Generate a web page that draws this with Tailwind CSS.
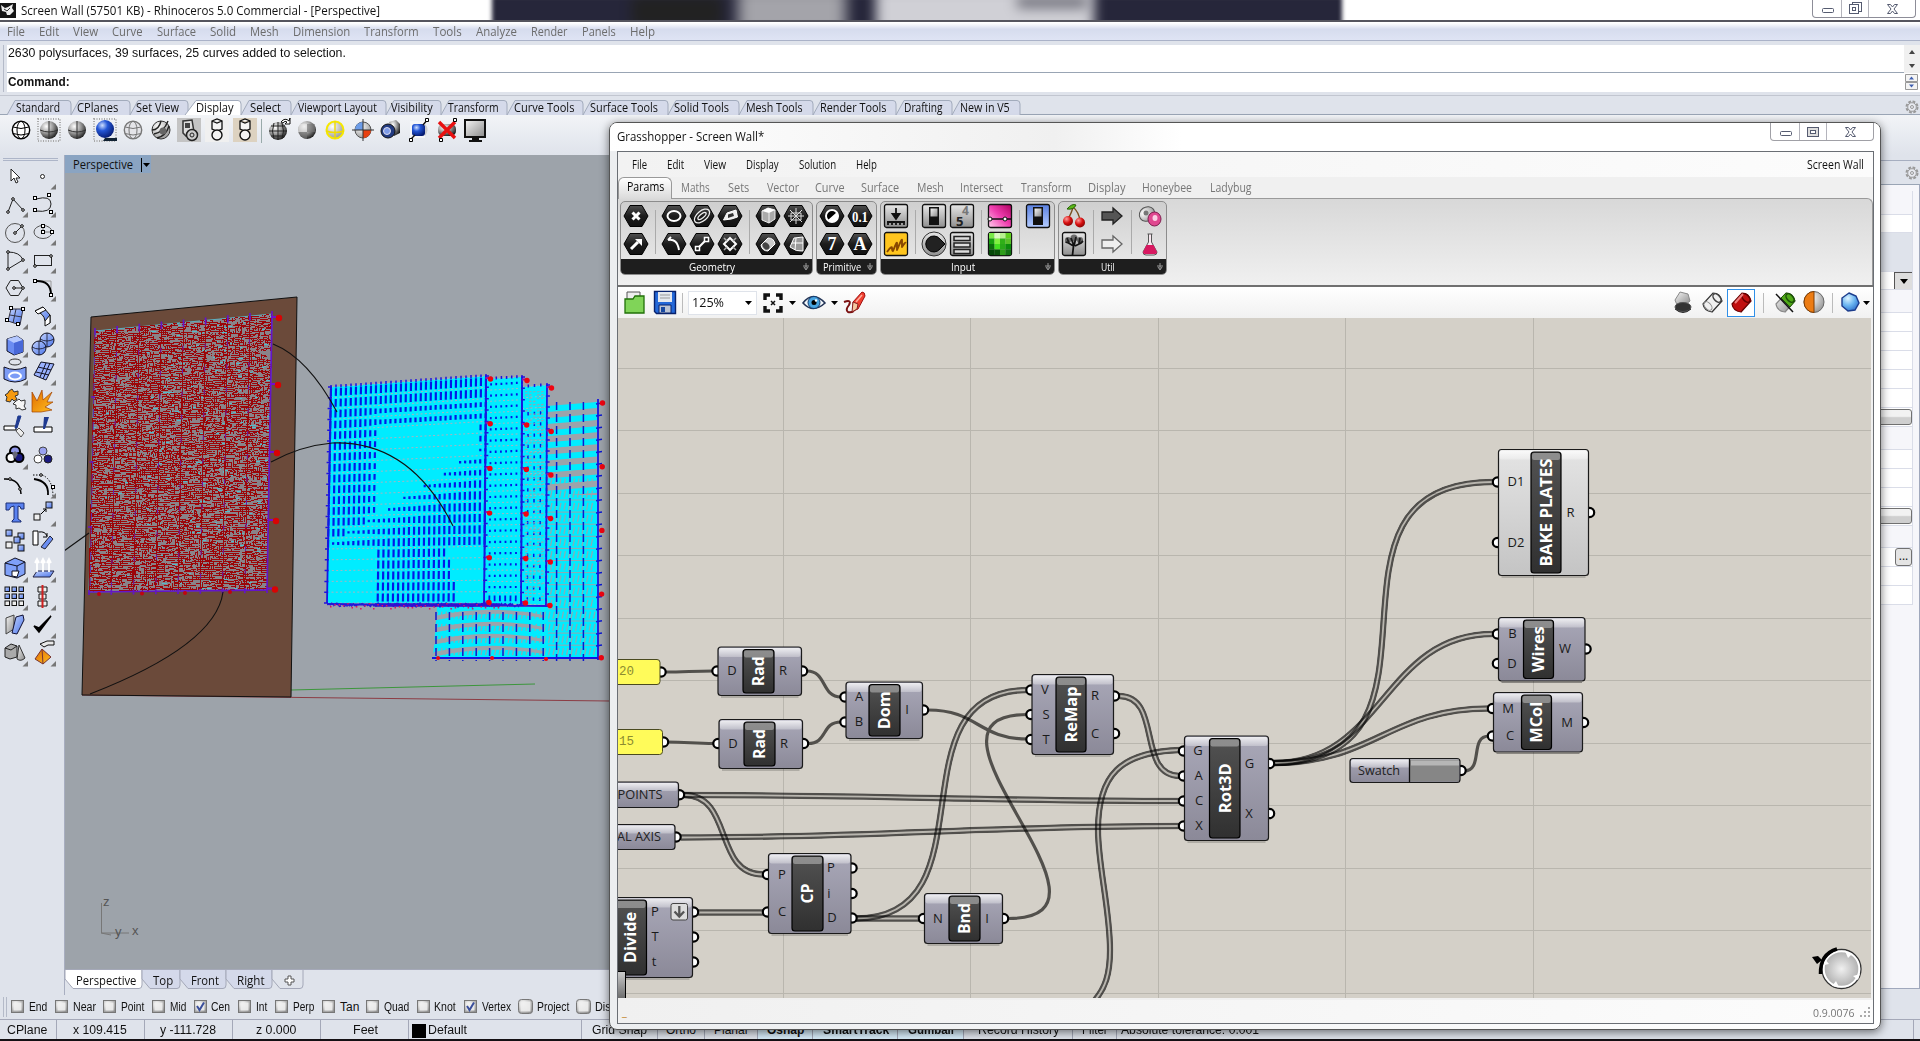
<!DOCTYPE html>
<html lang="en">
<head>
<meta charset="utf-8">
<title>Screen Wall - Rhinoceros 5.0</title>
<script src="https://cdn.jsdelivr.net/npm/@tailwindcss/browser@4"></script>
</head>
<body class="relative flex h-[1041px] w-[1920px] flex-col overflow-hidden bg-[#dfe3eb] font-['Open_Sans','Noto_Sans',sans-serif] text-[12px] leading-none text-[#111]">

<svg class="absolute h-0 w-0" aria-hidden="true"><defs>
<radialGradient id="gs" cx=".35" cy=".3" r=".75"><stop offset="0" stop-color="#fff"/><stop offset=".5" stop-color="#999"/><stop offset="1" stop-color="#1a1a1a"/></radialGradient>
<radialGradient id="gl" cx=".35" cy=".3" r=".8"><stop offset="0" stop-color="#fff"/><stop offset="1" stop-color="#909090"/></radialGradient>
<radialGradient id="gb" cx=".35" cy=".3" r=".75"><stop offset="0" stop-color="#cfe0ff"/><stop offset=".4" stop-color="#2456d6"/><stop offset="1" stop-color="#051a70"/></radialGradient>
<radialGradient id="gc" cx=".35" cy=".3" r=".8"><stop offset="0" stop-color="#ddf4ff"/><stop offset=".5" stop-color="#6bb5f0"/><stop offset="1" stop-color="#2868c8"/></radialGradient>
<radialGradient id="gr" cx=".35" cy=".3" r=".8"><stop offset="0" stop-color="#ff9a9a"/><stop offset=".5" stop-color="#d81010"/><stop offset="1" stop-color="#700"/></radialGradient>
<linearGradient id="lb" x1="0" y1="0" x2="1" y2="1"><stop offset="0" stop-color="#c4d4ff"/><stop offset="1" stop-color="#4a74e8"/></linearGradient>
<linearGradient id="lg" x1="0" y1="0" x2="1" y2="1"><stop offset="0" stop-color="#f6f6f6"/><stop offset="1" stop-color="#8a8a8a"/></linearGradient>
<linearGradient id="lo" x1="0" y1="0" x2="1" y2="1"><stop offset="0" stop-color="#e06a00"/><stop offset="1" stop-color="#ffc020"/></linearGradient>
<linearGradient id="hx" x1="0" y1="0" x2="0" y2="1"><stop offset="0" stop-color="#505050"/><stop offset=".5" stop-color="#1c1c1c"/><stop offset="1" stop-color="#111"/></linearGradient>
<linearGradient id="bt" x1="0" y1="0" x2="0" y2="1"><stop offset="0" stop-color="#e8e8e8"/><stop offset="1" stop-color="#8e8e8e"/></linearGradient>
<linearGradient id="bb" x1="0" y1="0" x2="0" y2="1"><stop offset="0" stop-color="#5a80e0"/><stop offset="1" stop-color="#b4ccff"/></linearGradient>
<linearGradient id="pk" x1="0" y1="1" x2="1" y2="0"><stop offset="0" stop-color="#ffd0ee"/><stop offset=".5" stop-color="#f040b0"/><stop offset="1" stop-color="#b00060"/></linearGradient>
<linearGradient id="nd" x1="0" y1="0" x2="0" y2="1"><stop offset="0" stop-color="#a9a8b8"/><stop offset="1" stop-color="#8b8998"/></linearGradient>
<linearGradient id="nw" x1="0" y1="0" x2="0" y2="1"><stop offset="0" stop-color="#e4e4e4"/><stop offset="1" stop-color="#c4c4c4"/></linearGradient>
<linearGradient id="gl2" x1="0" y1="0" x2="0" y2="1"><stop offset="0" stop-color="#fff" stop-opacity=".8"/><stop offset="1" stop-color="#fff" stop-opacity=".3"/></linearGradient>
<linearGradient id="nb" x1="0" y1="0" x2="0" y2="1"><stop offset="0" stop-color="#525252"/><stop offset="1" stop-color="#303030"/></linearGradient>
<linearGradient id="gd" x1="0" y1="0" x2="0" y2="1"><stop offset="0" stop-color="#ccc"/><stop offset="1" stop-color="#6c6c6c"/></linearGradient>
</defs></svg>

<!-- title bar -->
<header class="relative flex h-[22px] shrink-0 items-start overflow-hidden border-b-2 border-[#55555e] bg-white">
  <div class="absolute -top-1 left-[492px] h-8 w-[850px] overflow-hidden bg-[#26263a] blur-[2px]">
    <div class="absolute top-0 left-[140px] h-8 w-[90px] bg-[#222] blur-[6px]"></div>
    <div class="absolute -top-2 left-[246px] h-12 w-[108px] bg-[#a4a4aa] blur-[7px]"></div>
    <div class="absolute -top-2 left-[384px] h-12 w-[218px] bg-[#d0d0d6] blur-[6px]"></div>
    <div class="absolute top-0 left-[525px] h-3 w-[70px] bg-[#70707a] blur-[6px]"></div>
  </div>
  <svg class="mt-[3px] h-[15px] w-4" viewBox="0 0 16 15"><rect width="16" height="15" fill="#151515"/><path d="M1 2l4 3 3-1 5-3-1 4 2 3-4 4-3 0-1-3-4-1z" fill="#eee"/><path d="M4 6l3 2 3-3" stroke="#333" fill="none"/></svg>
  <span class="mt-[5px] ml-[5px] whitespace-nowrap" data-w="359">Screen Wall (57501 KB) - Rhinoceros 5.0 Commercial - [Perspective]</span>
  <div class="ml-auto mr-[4px] flex h-[18px] rounded-b-[4px] border border-t-0 border-[#8d8d98] bg-white" id="rb"></div>
</header>

<nav class="flex h-[19px] shrink-0 items-center border-b border-[#aab2c8] bg-linear-to-b from-white from-5% via-[#d6dcee] via-40% to-[#dfe4f4] pt-[2px] text-[#6c6c6c]" id="menu"></nav>

<!-- command area -->
<section class="mt-1 ml-[3px] flex h-[47px] shrink-0 border-l border-[#b4bac8] pl-[3px] font-['Liberation_Sans',sans-serif]">
  <div class="flex flex-1 flex-col bg-white">
    <div class="flex h-7 justify-between border-b border-[#99a5b4]">
      <span class="mt-[2px] ml-[1px] whitespace-nowrap" data-w="338">2630 polysurfaces, 39 surfaces, 25 curves added to selection.</span>
      <svg class="h-7 w-4 bg-[#f0f0f0]" viewBox="0 0 16 28"><path d="M5 9l3-4 3 4zM5 19l3 4 3-4z" fill="#444"/></svg>
    </div>
    <div class="flex flex-1 justify-between">
      <span class="mt-[3px] ml-[1px] whitespace-nowrap font-bold" data-w="62">Command:</span>
      <svg class="mt-px mr-[2px] h-4 w-[13px]" viewBox="0 0 13 16"><path d="M.5.5h12v7H.5zM.5 8.500h12v7H.5z" fill="#f4f4f4" stroke="#999"/><path d="M4 5.500l2.500-3 2.500 3zM4 10.500l2.500 3 2.500-3z" fill="#3f5fb0"/></svg>
    </div>
  </div>
</section>

<!-- toolbar tabs -->
<div class="mt-[3px] flex h-5 shrink-0 items-end border-t border-b border-t-[#c2c6d0] border-b-[#9aa5b5] pl-[7px]" id="tabs"></div>

<div class="flex h-10 shrink-0 items-start bg-linear-to-b from-[#f2f4f7] to-[#dfe3eb] pl-[7px]" id="tools"></div>

<main class="flex min-h-0 flex-1">
  <aside class="w-[65px] shrink-0 border-r border-[#a8aec0]">
    <div class="mt-[3px] ml-[3px] h-[3px] w-[55px] border-y border-[#adb5c8]"></div>
    <div class="mt-[1px] ml-[1px] grid w-14 auto-rows-[28.06px] grid-cols-[28px_28px]" id="side"></div>
  </aside>
  <div class="flex w-[545px] shrink-0 flex-col">
    <svg class="h-[814px] w-[545px] bg-[#9da3aa]" viewBox="65 155 545 814" id="scene"></svg>
    <div class="flex h-5 items-start border-t border-[#a4a8b8]" id="vtabs"></div>
  </div>
  <div class="flex-1"></div>
  <aside class="flex w-[60px] shrink-0 flex-col">
    <div class="mt-[5px] flex h-[25px] items-center justify-end border-t border-b border-t-[#a6aec0] border-b-[#9aa5b5] pr-[1px]" data-gear></div>
    <div class="flex h-[804px] flex-col border-r border-b border-[#a0a8bc] bg-[#f6f6fa] pr-[6px] pt-[6px]" id="props"></div>
  </aside>
</main>

<div class="ml-[3px] flex h-[22px] shrink-0 items-center pt-[1px] font-['Liberation_Sans',sans-serif]"><i class="h-5 w-[4px] border-x border-[#b4bac8]"></i><div class="flex" id="osnap"></div></div>
<div class="mt-[2px] flex h-5 shrink-0 border-t border-[#a4a8b8] font-['Liberation_Sans',sans-serif]" id="status"></div>
<div class="h-[2px] shrink-0 bg-[#141014]"></div>

<!-- Grasshopper window -->
<section class="absolute top-[122px] left-[609px] flex h-[908px] w-[1272px] flex-col rounded-[8px] border border-[#555] bg-linear-to-r from-[#eceef0] to-white shadow-[0_2px_10px_rgba(0,0,0,0.55)]">
  <div class="flex h-7 shrink-0 items-start rounded-t-[7px] bg-linear-to-r from-white via-[#f0f0f0] via-35% to-white to-45%">
    <span class="mt-[8px] ml-[7px] whitespace-nowrap" data-w="147">Grasshopper - Screen Wall*</span>
    <div class="ml-auto mr-[6px] flex h-[18px] rounded-b-[4px] border border-t-0 border-[#a0a0a6] bg-white" id="gb2"></div>
  </div>
  <div class="mr-[6px] ml-[7px] flex h-[873px] flex-col border border-[#6a6e74] bg-[#f0f0f0]">
    <div class="flex h-[25px] shrink-0 items-center bg-linear-to-r from-[#f2f2f2] to-[#fcfcfc]">
      <div class="flex" id="gmenu"></div>
      <span class="ml-auto mr-[9px] whitespace-nowrap" data-w="57">Screen Wall</span>
    </div>
    <div class="relative flex h-[21px] shrink-0 text-[#777]">
      <div class="z-10 mb-[-1px] flex h-[22px] w-[54px] shrink-0 justify-center rounded-t-[6px] border border-b-0 border-[#999] bg-linear-to-b from-white to-[#dadada] pt-[3px] text-black"><span class="whitespace-nowrap" data-w="37">Params</span></div>
      <div class="flex pt-[5px]" id="gtabs"></div>
    </div>
    <div class="flex h-[87px] shrink-0 items-start gap-[3px] rounded-tr-[6px] border-t border-r border-[#9a9a9a] bg-linear-to-b from-[#d8d8d8] to-[#f0f0f0] pt-[2px] pl-[2px]" id="ribbon"></div>
    <div class="flex h-[33px] shrink-0 items-center border-t-2 border-[#707070] bg-linear-to-b from-white to-[#f1f1f1]" id="gtools"></div>
    <svg class="h-[680px] w-[1253px] shrink-0 bg-[#d4d0c8]" viewBox="618 318 1253 680" id="canvas"></svg>
    <div class="mt-[2px] flex flex-1 items-center justify-between bg-linear-to-r from-[#f0f0f0] to-[#fcfcfc] pl-1 text-[11px] text-[#777]">
      <span class="text-[#c08020]">_</span>
      <span class="flex items-end gap-[4px]"><span class="whitespace-nowrap" data-w="42">0.9.0076</span><svg class="mr-[2px] h-3 w-3" viewBox="0 0 12 12"><path d="M9 1h2v2H9zM5 5h2v2H5zM9 5h2v2H9zM1 9h2v2H1zM5 9h2v2H5zM9 9h2v2H9z" fill="#aaa"/></svg></span>
    </div>
  </div>
</section>

<script>
const $ = id => document.getElementById(id);
let seed = 7;
const rnd = () => (seed = (seed * 16807) % 2147483647) / 2147483647;
const svg = (inner, w, h, cls) => `<svg class="${cls || 'shrink-0'}" width="${w}" height="${h}" viewBox="0 0 ${w} ${h}">${inner}</svg>`;

// A row of labels: [text, left, right], spaced from the row's own origin.
const labels = (list, origin) => { let at = origin; return list.map(([t, a, b]) => { const s = `<span class="inline-block whitespace-nowrap" style="margin-left:${a - at}px" data-w="${b - a}">${t}</span>`; at = b; return s; }).join(''); };

$('menu').innerHTML = labels([['File',7,25],['Edit',39,59],['View',73,98],['Curve',112,143],['Surface',157,196],['Solid',210,236],['Mesh',250,279],['Dimension',293,350],['Transform',364,419],['Tools',433,462],['Analyze',476,517],['Render',531,568],['Panels',582,616],['Help',630,655]], 0);
$('gmenu').innerHTML = labels([['File',632,647],['Edit',667,684],['View',704,726],['Display',746,779],['Solution',799,836],['Help',856,877]], 618);
$('gtabs').innerHTML = labels([['Maths',681,710],['Sets',728,749],['Vector',767,799],['Curve',815,845],['Surface',861,899],['Mesh',917,944],['Intersect',960,1003],['Transform',1021,1072],['Display',1088,1126],['Honeybee',1142,1192],['Ladybug',1210,1252]], 672);

// window buttons
const winBtns = max => svg('<rect x="9.500" y="8.500" width="11" height="4" rx="1" fill="#fff" stroke="#555b70"/>',28,17) + '<i class="w-px bg-[#b4b4bc]"></i>' +
  svg(max ? '<rect x="10.500" y="2.500" width="9" height="9" fill="#fff" stroke="#555b70"/><rect x="7.500" y="4.500" width="9" height="9" fill="#fff" stroke="#555b70"/><rect x="10.500" y="7.500" width="3" height="3" fill="none" stroke="#555b70"/>' : '<rect x="7.500" y="4.500" width="11" height="9" fill="#ddd" stroke="#555b70"/><rect x="10.500" y="7.500" width="5" height="3" fill="#fff" stroke="#555b70"/>',26,17) +
  '<i class="w-px bg-[#b4b4bc]"></i>' + svg('<path d="M18.500 4.500h3l2 2.500 2-2.500h3l-3.500 4.500 3.500 4.500h-3l-2-2.500-2 2.500h-3l3.500-4.500z" fill="#fff" stroke="#555b70"/>',46,17);
$('rb').innerHTML = winBtns(true); $('gb2').innerHTML = winBtns(false);

// toolbar tabs: [text, text left, text right, right edge]
let prev = 7;
$('tabs').innerHTML = [['Standard',16,60,71],['CPlanes',77,118,130],['Set View',136,179,188],['Display',196,234,241],['Select',250,281,291],['Viewport Layout',298,377,386],['Visibility',391,433,441],['Transform',448,499,507],['Curve Tools',514,574,583],['Surface Tools',590,658,668],['Solid Tools',674,729,739],['Mesh Tools',746,803,813],['Render Tools',820,886,896],['Drafting',904,943,952],['New in V5',960,1010,1020]].map(([t,a,b,e]) => {
  const w = e - prev, on = t === 'Display';
  const s = `<div class="relative flex h-[14px] shrink-0 items-center pt-[2px]" style="width:${w}px"><svg class="absolute top-0 left-0 overflow-visible" width="${w}" height="14"><path d="M${on ? -3 : 0} 15L8 .5H${w-3}Q${w} .5 ${w} 4V15" fill="${on ? '#fff' : '#d5daea'}" stroke="#a2abbc"/></svg><span class="relative inline-block whitespace-nowrap" style="margin-left:${a-prev}px" data-w="${b-a}">${t}</span></div>`;
  prev = e; return s; }).join('') + '<span class="ml-auto pr-[1px]" data-gear></span>';
document.querySelectorAll('[data-gear]').forEach(g => g.innerHTML = svg('<circle cx="7" cy="7" r="5.500" fill="none" stroke="#999" stroke-width="2" stroke-dasharray="2.800 1.500"/><circle cx="7" cy="7" r="4.300" fill="#e8eaf0" stroke="#999"/><circle cx="7" cy="7" r="1.500" fill="none" stroke="#999"/>',14,14));

// display toolbar
const globe = (f, s) => `<circle cx="14" cy="14" r="8.700" fill="${f}" stroke="${s}" stroke-width="1.400"/><ellipse cx="14" cy="14" rx="4" ry="8.700" fill="none" stroke="${s}"/><path d="M6 11q8 3 16 0M6 17.500q8 3 16 0" fill="none" stroke="${s}"/>`;
const mouse = bg => `<rect x="2" y="2" width="24" height="24" fill="${bg}"/><path d="M9 5l5-2 5 2v8l-5 2-5-2zM9 5l5 2 5-2" fill="#f4f4f4" stroke="#111" stroke-width="1.300"/><circle cx="14" cy="19" r="5" fill="#f4f4f4" stroke="#111" stroke-width="1.400"/>`;
const dots = '<rect x="3" y="3" width="22" height="22" fill="none" stroke="#aaa" stroke-width="2" stroke-dasharray="1 1.500"/>';
const tl = [
  globe('#fff','#000'), dots + '<circle cx="14" cy="14" r="9" fill="url(#gs)"/><path d="M14 5v18M5 14q9 4 18 0" stroke="#333" fill="none"/>',
  '<circle cx="14" cy="14" r="9" fill="url(#gs)"/><path d="M14 5v18M5 14q9 4 18 0" stroke="#333" fill="none"/>', dots + '<path d="M14 22h12v3H12z" fill="#123"/><circle cx="14" cy="13" r="9" fill="url(#gb)"/>',
  globe('#e4e4e8','#777'), '<circle cx="14" cy="14" r="9" fill="url(#gl)" stroke="#333"/><path d="M7 18Q17 16 21 5M5 14q7 0 9-9M10 22q9-2 12-12" stroke="#222" stroke-width="1.400" fill="none"/><circle cx="16" cy="15" r="3.500" fill="#666"/>',
  '<rect x="2" y="2" width="24" height="24" fill="#c4c4c4"/><path d="M8 5l9-1 2 12-8 4-3-3z" fill="#ddd" stroke="#333" stroke-width="1.500"/><rect x="10" y="7" width="5" height="5" fill="#444"/><circle cx="17" cy="19" r="5.500" fill="#ccc" stroke="#222" stroke-width="1.500"/><circle cx="17" cy="19" r="2" fill="none" stroke="#222"/>',
  mouse('#f0f0f0'), mouse('#ddd2c0'),
  '<circle cx="13" cy="15" r="9" fill="url(#gs)"/><path d="M13 6v18M4 15h18M9 7q-3 8 0 16M17 7q3 8 0 16M6 10h14M6 20h14" stroke="#222" fill="none"/><path d="M16 6q4-5 8-1l1-3v6h-5l2-2q-2-2-4 1z" fill="#fff" stroke="#111"/>',
  '<circle cx="14" cy="14" r="9" fill="url(#gs)"/><path d="M14 8h8v8h-8zM6 16h8v7q-6 0-8-7z" fill="#777" opacity=".6"/><path d="M7 8h7v8H5q0-5 2-8z" fill="#e8e8e8" opacity=".6"/>',
  '<circle cx="14" cy="14" r="8.500" fill="url(#gl)" stroke="#f6e800" stroke-width="2"/><path d="M14 5v18M5 15q9 3 18 0" stroke="#f0dc00" stroke-width="1.400" fill="none"/>',
  '<circle cx="14" cy="14" r="8" fill="url(#gl)" stroke="#555"/><path d="M14 14V6a8 8 0 0 0-8 8z" fill="#6c9ce8"/><path d="M14 14v8a8 8 0 0 0 8-8z" fill="#e84010"/><path d="M14 3v22M3 14h22" stroke="#333"/>',
  '<path d="M12 6l7-2 4 4v9l-6 3z" fill="url(#gs)"/><circle cx="11" cy="15" r="7" fill="#223a80" stroke="#111"/><circle cx="10" cy="15" r="3.500" fill="#7e9be8" stroke="#dde"/>',
  '<path d="M5 5h15v17H5z" fill="#f6f6f8"/><rect x="7" y="8" width="13" height="12" rx="3" fill="url(#gb)"/><path d="M20 8q5 5 0 12z" fill="#ccc"/><path d="M5 24L10 19M18 9l5-6" stroke="#111" stroke-width="1.400"/><path d="M20.500 2.500h3v3h-3zM4.500 22.500h3v3h-3z" fill="#fff" stroke="#000"/>',
  '<rect x="5" y="8" width="18" height="12" rx="5" fill="url(#gs)"/><path d="M6 6l16 16M22 6L6 22" stroke="#e81010" stroke-width="3.400"/><path d="M20.500 2.500h3v3h-3zM6.500 22.500h3v3h-3z" fill="#fff" stroke="#000"/>',
  '<rect x="4" y="4" width="20" height="17" fill="url(#lg)" stroke="#111" stroke-width="2"/><path d="M11 22h7v2h3v2H8v-2h3z" fill="#111"/>'];
$('tools').innerHTML = tl.map((p, i) => (i === 9 ? '<i class="mr-[3px] ml-[2px] mt-[4px] h-6 w-px bg-[#9aa]"></i>' : '') + svg(p,28,28,'mt-[1px] w-[28px] shrink-0')).join('');

// side palette, two columns
const k = 'stroke="#222" fill="none"', sq = (x,y,f) => `<rect x="${x-1.5}" y="${y-1.5}" width="3" height="3" fill="${f||'#fff'}" stroke="#000"/>`, pt = (x,y) => `<circle cx="${x}" cy="${y}" r="1.300" fill="#fff" stroke="#000"/>`;
const bx = (x,y,s,f) => `<rect x="${x}" y="${y}" width="${s}" height="${s}" fill="${f||'url(#lb)'}" stroke="#111"/>`;
const sd = [
 ['<path d="M10 7v12l3-3 2 5 2-1-2-4h4z" fill="#fff" stroke="#222"/>',0],['<circle cx="13.500" cy="14.500" r="2" fill="#fff" stroke="#222"/>',1],
 [`<path d="M7 22l5-13 10 11" ${k}/>`+pt(7,22)+pt(12,9)+pt(22,20),1],[`<path d="M7 9q15-4 15 5 0 9-15 7" ${k}/>`+sq(6,8)+sq(20,5)+sq(6,20)+sq(22,22),1],
 [`<circle cx="14" cy="15" r="9.500" stroke="#555" fill="none"/><path d="M15 14l6-6" ${k}/>`+pt(14,15)+pt(21,8),1],[`<ellipse cx="14" cy="14" rx="9" ry="6.500" stroke="#555" fill="none"/><path d="M14 14V8M14 14h9" stroke="#777"/>`+sq(14,8)+sq(14,14)+sq(23,14),1],
 [`<path d="M7 6v17l15-9M7 6q12 0 15 8" ${k}/>`+pt(7,6)+pt(7,23)+pt(22,14),1],[`<rect x="5.500" y="9.500" width="17" height="10" ${k}/>`+pt(22,10)+pt(6,20),1],
 [`<path d="M9.500 6.500h8l4.500 7.500-4.500 7.500h-8L5 14zM14 14h8" ${k}/>`+pt(13,14)+pt(22,14),1],[`<path d="M8 7h14v14" stroke="#999" fill="none"/><path d="M6 7q16-1 16 14" stroke="#000" stroke-width="2" fill="none"/>`+sq(6,7)+sq(22,21),1],
 [`<path d="M10 7h12l-3 16-12-4z" fill="url(#lb)" stroke="#334"/><path d="M15 7l-3 14M9 13l12 2" stroke="#334"/>`+sq(10,6)+sq(22,7)+sq(6,18)+sq(17,22),1],['<path d="M6 9l8-4 7 8v8l-5-2q-1-8-10-10z" fill="url(#lb)" stroke="#111"/><path d="M6 9l8-4 3 3-8 4zM16 19l5-6v8l-5 3z" fill="#fff" stroke="#111"/>',1],
 ['<path d="M6 9l10-3 6 4v12l-9 3-7-4z" fill="#6a8cf2" stroke="#112"/><path d="M6 9l10-3 6 4-9 3z" fill="#b4c8ff"/><path d="M13 13l9-3v12l-9 3z" fill="#4868d8"/>',1],['<circle cx="18" cy="10" r="7" fill="url(#lb)" stroke="#112"/><circle cx="10" cy="18" r="7" fill="url(#lb)" stroke="#112"/><path d="M3 17q7 4 14 0M10 11v14M11 9q7 4 14 0M18 3v14" stroke="#112" fill="none" stroke-width=".8"/>',1],
 ['<ellipse cx="14" cy="4" rx="6" ry="3" fill="none" stroke="#333"/><path d="M3 9q11 5 22 0v12q-11 6-22 0z" fill="#7c9cf6" stroke="#112"/><ellipse cx="14" cy="18" rx="6" ry="3.500" fill="none" stroke="#fff" stroke-width="2"/>',1],['<path d="M12 4l13 2-8 16-12-5z" fill="#9ab2ff" stroke="#112"/><path d="M9 9l13 3M7 14l13 3M17 5l-6 14M21 5l-7 16" stroke="#112"/>',1],
 ['<path d="M8 5l3-2 2 3 4-1v4l-3 1 2 3-3 2-2-2-2 3-4-1 1-4-2-2 3-2z" fill="#f59a10" stroke="#333"/><path d="M15 15l3-2 2 2 4-1v4l-1 2 2 3-4 1-3-2-3 1v-4l-3-1z" fill="#f6f6f6" stroke="#333"/>',0],['<path d="M3 26V6l5 9 5-11 1 10 9-8-5 10 6 0-8 5 7 3-11 2z" fill="url(#lo)" stroke="#a04000" stroke-width=".7"/>',0],
 ['<path d="M3 12h12v4H3z" fill="#fff" stroke="#000"/><path d="M14 14l3-12h3l-4 12z" fill="#1f3a90" stroke="#1f3a90"/><path d="M15 17l3-3 5 5-3 4z" fill="#eee" stroke="#555"/>',0],['<path d="M5 13h18v5H5z" fill="#fff" stroke="#000"/><path d="M14 15l1-12h5l-4 12z" fill="#1f3a90"/>',0],
 ['<circle cx="14" cy="9.500" r="5" fill="#8f96e8" stroke="#000" stroke-width="2"/><circle cx="10" cy="15.500" r="4.500" fill="#fff" stroke="#000" stroke-width="2"/><circle cx="18" cy="15.500" r="4.500" fill="#1a1a80" stroke="#000" stroke-width="2"/><path d="M11 12l3-3 3 3-3 5z" fill="#667"/>',1],['<circle cx="14" cy="9" r="4" fill="#9aa2f0" stroke="#444"/><circle cx="9" cy="17" r="4" fill="#fff" stroke="#444"/><circle cx="19" cy="17" r="4" fill="#1a1a80" stroke="#222"/>',0],
 [`<path d="M3 8q16-1 17 15" stroke="#000" stroke-width="1.500" fill="none"/>`+pt(9,8)+pt(19,18),0],[`<path d="M5 8q15 2 14 16" stroke="#000" stroke-width="1.800" fill="none"/><path d="M4 4h9q11 4 11 22" stroke="#000" stroke-dasharray="1.500 1.500" fill="none"/>`+pt(12,4)+sq(24,16),1],
 ['<path d="M5 4h18v6h-3q0-3-3-3v13l3 2v1h-9v-1l2-2V7q-4 0-5 4l-3 0z" fill="#5a82f0" stroke="#1b2c70"/>',0],[bx(17,3,6)+bx(5,15,6,'#eee')+'<path d="M12 15l5-5m0 3v-3h-3" stroke="#000" fill="none"/>',1],
 [bx(5,3,6)+bx(17,6,6)+bx(13,10,6)+bx(5,15,6,'#eee')+bx(17,18,6),0],['<path d="M4 4h5v14H4z" fill="#fff" stroke="#000"/><path d="M12 20l9-11 3 3-8 10z" fill="#6c8ff2" stroke="#223"/><path d="M10 5q6-1 8 4m0-3v4h-4" stroke="#000" fill="none"/>',0],
 ['<path d="M4 8l10-5 10 4v12l-8 4-12-3z" fill="#7fa0f8" stroke="#112"/><path d="M4 8l12 3 8-4M16 11v5" stroke="#112" fill="none"/><path d="M11 16h7l-2 6-5-1z" fill="#fff" stroke="#112"/>',1],['<path d="M4 22l4-6h17l-4 6z" fill="url(#lb)" stroke="#224"/><path d="M8 17V7M14 17V7M20 17V7M6 8l2-4 2 4M12 8l2-4 2 4M18 8l2-4 2 4" stroke="#fff" stroke-width="1.800" fill="none"/>',1],
 [[4,11,18].map(x=>[4,11,18].map(y=>bx(x,y,4.5,y>15?'#eee':0)).join('')).join(''),1],['<path d="M9 4h9v5H9zM10 11h7v5h-7zM9 18h9v5H9z" fill="#eee" stroke="#111"/><path d="M13.500 2v23" stroke="#d02020" stroke-width="2"/>',1],
 ['<path d="M5 7l8-3v14l-8 5z" fill="url(#lg)" stroke="#444"/><path d="M15 6l7-2 1 5-7 14-5-1z" fill="url(#lb)" stroke="#113"/>',1],['<path d="M5 15l5 6L22 5l-12 12z" fill="#000" stroke="#000" stroke-width="1.500"/>',1],
 ['<path d="M4 9l6-4 6 2v11l-7 2-5-2z" fill="#aaa" stroke="#222"/><path d="M4 9l6 2 6-4" stroke="#222" fill="none"/><path d="M18 6l6 13q-4 4-8 1z" fill="url(#lg)" stroke="#333"/>',1],['<path d="M13 10l9 8-8 7-8-5z" fill="url(#lo)" stroke="#733"/><path d="M13 10l1 15" stroke="#733"/><path d="M11 5l7-3h7v4h-6l-4 2z" fill="#e8e8e8" stroke="#111"/>',1]];
$('side').innerHTML = sd.map(([p,t]) => svg(p + (t ? '<path d="M27 22v5.500h-5.500z" fill="#777"/>' : ''),28,28)).join('');

// perspective view
const L = (a,b,c,d) => `M${a.toFixed(1)} ${b.toFixed(1)}L${c.toFixed(1)} ${d.toFixed(1)}`;
const quad = q => (u,v) => [ (q[0]*(1-u)+q[2]*u)*(1-v)+(q[6]*(1-u)+q[4]*u)*v, (q[1]*(1-u)+q[3]*u)*(1-v)+(q[7]*(1-u)+q[5]*u)*v ];
let S = '<path d="M82 695L610 701" stroke="#8c3c44"/><path d="M291 690L535 684" stroke="#3c963c"/>';
S += '<path d="M91 317L297 297L291 697L82 695z" fill="#6b4a3a" stroke="#111"/>';
const R = quad([95,331,272,314,267,590,89,592]);
let red = '', cy = '', pu = '';
for (let i = 0; i < 138; i++) for (let u = 0; u < 1;) { const l = (1 + rnd()*5)/178, v = (i+rnd()*.5)/138; if (rnd() < .74 - u*.08) { const a = R(u,v), b = R(Math.min(1,u+l),v); red += L(a[0],a[1],b[0],b[1]); } else if (rnd() < (u > .3 ? .14 : .04)) { const a = R(u,v), b = R(Math.min(1,u+l*.9),v); cy += L(a[0],a[1],b[0],b[1]); } u += l; }
for (let i = 0; i < 88; i++) for (let v = 0; v < 1;) { const l = (1 + rnd()*3)/270, u = (i+rnd()*.4)/88; if (rnd() < .33) { const a = R(u,v), b = R(u,Math.min(1,v+l)); red += L(a[0],a[1],b[0],b[1]); } v += l; }
for (let i = 0; i <= 8; i++) { const a = R(i/8,0), b = R(i/8,1); pu += L(a[0],a[1]-3,a[0],a[1]+4) + L(b[0],b[1]-2,b[0],b[1]+3); red += L(a[0],a[1],b[0],b[1]); }
S += `<path d="M95 331L272 314L267 590L89 592z" fill="#898389" stroke="#5ab0c0"/><g shape-rendering="crispEdges" fill="none"><path d="${cy}" stroke="#52bccc"/><path d="${red}" stroke="#9c0508"/></g>`;
for (let i = 1; i < 8; i++) { const a = R(i/8,0), b = R(i/8,1); S += `<path d="${L(a[0],a[1],b[0],b[1])}" stroke="#6a18b0" stroke-dasharray="5 18"/>`; }
S += `<path d="${pu}M272 314L267 590L89 592" stroke="#6414c8" stroke-width="1.700" fill="none"/><path d="M95 331L90 592" stroke="#5a30b8" stroke-dasharray="8 5"/>`;
[[279,318],[278,385],[277,453],[276,521],[275,589.5]].forEach(([x,y]) => S += `<path d="M${x-8} ${y-1}h6" stroke="#7010d0" stroke-width="2"/><circle cx="${x}" cy="${y}" r="3.200" fill="#d80404"/>`);
[[99,594],[142,593.5],[185,593],[230,592]].forEach(([x,y]) => S += `<circle cx="${x}" cy="${y}" r="2" fill="#c00410"/>`);
[397,462,527].forEach((y,i) => S += `<path d="M${91-i*1.5} ${y}h4" stroke="#6414c8" stroke-width="1.500"/>`);

// lower stepped panel, then the narrow strips, then the large front panel
const cyan = '#00ecff';
let D = '', DB = '', DG = '';
for (let i = 0; i < 21; i++) { const y = 404 + i*12.1, x0 = i > 16 ? 435 : 545; DB += L(596,y,602,y-1); D += i < 8 ? `<path d="M547 ${y+2}l50-4v6l-50 4z" fill="${cyan}"/>` : ''; if (i >= 6) for (let x = x0; x < 594; x += 4.5) DG += L(x+1,y+9,x+2.500,y+2); }
S += `<path d="M547 495H597V658H433L437 607H547z" fill="${cyan}"/>` + D + `<path d="${DG}" stroke="#9da3aa" stroke-width="1.300" stroke-opacity=".85"/>`;
for (let i = 0; i < 4; i++) S += `<path d="M434 ${616+i*12}q55 -12 110 -1v3q-55 -10 -112 3z" fill="#9da3aa"/>`;
for (let i = 0; i < 12; i++) DB += L(436+i*13.4,i > 8 ? 402 : 612,436+i*13.4,661);
for (let y = 500; y < 655; y += 12.1) S += `<path d="M548 ${y}h48" stroke="#9da3aa"/>`;
S += `<path d="${DB}" stroke="#0c18d0" stroke-width="1.500" stroke-dasharray="8 4"/><path d="M598 399V660M432 658H600" stroke="#1414e0" stroke-width="1.800" fill="none"/>`;
const strip = (q, nx, ny, bw, blue) => { const P = quad(q); let b = '', g = '', e = ''; for (let j = 0; j <= ny; j++) { const z = P(1,j/ny), y = P(0,j/ny); e += L(z[0]-1,z[1],z[0]+3,z[1]) + L(y[0]-3,y[1],y[0]+1,y[1]); g += L(y[0],y[1],z[0],z[1]); for (let i = 0; i <= nx; i++) { if (j < ny && blue(i/nx,j/ny)) { const l = blue(i/nx,j/ny), a = P(i/nx,(j+.5-l/2)/ny), c = P(i/nx,(j+.5+l/2)/ny); b += L(a[0],a[1],c[0],c[1]); } if (j === 0) { const a = P(i/nx,0); e += L(a[0],a[1]-2,a[0],a[1]+1); } } }
  return `<path d="M${q[0]} ${q[1]}L${q[2]} ${q[3]}L${q[4]} ${q[5]}L${q[6]} ${q[7]}z" fill="${cyan}"/><path d="${g}" stroke="#a8b4c0" stroke-dasharray="2 2.300"/><path d="${b}" stroke="#0418e8" stroke-width="${bw}"/><path d="${e}" stroke="#2010e0" stroke-width="1.500"/><path d="M${q[0]} ${q[1]}L${q[6]} ${q[7]}M${q[2]} ${q[3]}L${q[4]} ${q[5]}" stroke="#1818e0" stroke-width="1.800"/>`; };
S += strip([522,387,547,385,546,605,521,604],4,20,1.5,(u,v) => v > .05 ? .3 : 0);
let cg = ''; for (let y = 392; y < 602; y += 3.2) for (let x = 525; x < 544; x += 4) if (rnd() < .65) cg += L(x,y,x+2.5,y-.5);
S += `<path d="${cg}" stroke="#8aa8b4" stroke-width="1.200"/>`;
S += strip([486,379,522,377,521,604,484,604],7,20,1.800,(u,v) => v > .9 ? .5 : .2);
// the blue slats shrink to nothing along a diagonal sweep and in the lower corners
S += strip([331,387,486,376,484,603,327,603],31,20,2.200,(u,v) => {
  if (u < .3 && v > .74) return 0;
  if (u > .84 - (1-v)*.3 && v > .74) return 0;
  if (v < .08) return .72;
  const edge = .7 - u*.42;
  if (v > edge) return Math.min(.72, .2 + (v-edge)*3);
  if (u < .32) return .7 - Math.max(0, u-.2)*2;
  if (v < .16) return .42;
  return u > .96 ? .5 : 0; });
let base = ''; for (let x = 327; x < 520; x += 2) base += L(x,603+rnd()*4,x+2,603+rnd()*4);
S += `<path d="${base}M327 604L548 606" stroke="#2418d8" stroke-width="1.800"/><path d="M375 605H500" stroke="#3010d0" stroke-width="3.500"/>`;
for (let i = 0; i < 40; i++) S += `<rect x="${330+i*4.3}" y="${(603+rnd()*5).toFixed(0)}" width="1.500" height="1.500" fill="#e01060"/>`;
for (let i = 0; i < 6; i++) S += [[490.5,379,44.7],[527,380.5,44.5],[551.5,388,43.5]].map(([x,y,d]) => `<path d="M${x-5} ${y-1+i*d}h4" stroke="#a010a0" stroke-width="2"/><circle cx="${x-i*.3}" cy="${y+i*d}" r="2.700" fill="#f00410"/>`).join('') + (i < 5 ? `<circle cx="${602.5-i*.3}" cy="${403+i*63.7}" r="2.700" fill="#f00410"/>` : '');
S += '<path d="M438 658h.1M492 658h.1M546 659h.1" stroke="#f00410" stroke-width="4" stroke-linecap="round"/>';
S += '<path d="M273 344Q308 358 337 412M271 462Q300 446 332 443Q410 440 453 526M64 551L89 533M223 592Q216 645 90 694" fill="none" stroke="#111" stroke-width="1.100"/>';
S += '<rect x="65" y="155" width="86" height="18" fill="#8aa4c2"/><path d="M141.500 158v14" stroke="#000"/><path d="M143 163h7l-3.500 4z"/><text x="73" y="169" font-size="12" textLength="60" lengthAdjust="spacingAndGlyphs" fill="#111">Perspective</text>';
S += '<g font-size="13" fill="#555" font-family="Liberation Sans"><path d="M101.500 903v30H129M101 933l10 2" stroke="#777" fill="none"/><text x="103" y="906">z</text><text x="115" y="936">y</text><text x="132" y="935">x</text></g>';
$('scene').innerHTML = S;

// viewport tabs
$('vtabs').innerHTML = [['Perspective',77,60],['Top',38,20],['Front',46,28],['Right',46,28],['',31,0]].map(([t,w,tw],i) => `<div class="relative flex h-5 justify-center pt-[5px] pl-[4px]" style="width:${w}px"><svg class="absolute top-0 left-0 overflow-visible" width="${w}" height="20"><path d="M0 0V9L8 18.500H${w-3}Q${w} 18.500 ${w} 15V0" fill="${i ? (t ? '#d4d9ea' : '#dfe3eb') : '#fff'}" stroke="#a4a8b8"/>${t ? '' : '<path d="M16 6h3v3h3v3h-3v3h-3v-3h-3v-3h3z" fill="#fff" stroke="#555"/>'}</svg>${t ? `<span class="relative inline-block whitespace-nowrap" data-w="${tw}">${t}</span>` : ''}</div>`).join('');

// object snaps: [text, box left, text left, text right]
let at = 7;
$('osnap').innerHTML = [['End',11,29,47],['Near',55,73,96],['Point',103,121,144],['Mid',152,170,186],['Cen',194,211,230],['Int',238,256,267],['Perp',275,293,314],['Tan',322,340,359],['Quad',366,384,409],['Knot',417,434,456],['Vertex',464,482,511],['Project',518,537,569],['Disable',576,595,631]].map(([t,a,b,c]) => {
  const p = a > 515, w = p ? 15 : 13, s = `<label class="flex items-center" style="margin-left:${a-at}px">${svg(`<rect x=".5" y=".5" width="${w-1}" height="${w-1}" rx="${p ? 3 : 0}" fill="url(#gl)" stroke="#777"/><rect x="2.500" y="2.500" width="${w-5}" height="${w-5}" fill="#eee" opacity=".9"/>` + (/Cen|Vertex/.test(t) ? '<path d="M3 6l2.500 4L10 2.500" stroke="#3a4f9c" stroke-width="2" fill="none"/>' : ''),w,w)}<span class="inline-block whitespace-nowrap" style="margin-left:${b-a-w}px" data-w="${c-b}">${t}</span></label>`;
  at = c; return s; }).join('');

// status cells: [text, left edge, text left, text right, right edge, on]
$('status').innerHTML = [['CPlane',0,7,47,57],['x 109.415',57,73,127,145],['y -111.728',145,160,216,233],['z 0.000',233,256,296,321],['Feet',321,353,378,409],['Default',409,428,467,582],['Grid Snap',582,592,647,658],['Ortho',658,666,696,705],['Planar',705,714,749,758],['Osnap',758,767,804,813,1],['SmartTrack',813,823,889,898,1],['Gumball',898,908,954,964,1],['Record History',964,978,1059,1073],['Filter',1073,1082,1108,1117],['Absolute tolerance: 0.001',1117,1121,1259,1914]].map(([t,l,a,b,e,on]) => `<div class="relative flex shrink-0 items-center border-r border-[#a4a8b8] pt-[1px] ${on ? 'bg-[#d6ebf8] font-bold' : ''}" style="width:${e-l}px">${t === 'Default' ? '<i class="absolute top-[4px] left-[3px] h-[14px] w-[14px] bg-black"></i>' : ''}<span class="inline-block whitespace-nowrap" style="margin-left:${a-l}px" data-w="${b-a}">${t}</span></div>`).join('');

// property rows: [height, kind]
$('props').innerHTML = [[24,'g'],[18,'w'],[39,'d'],[18,'v'],[23,'g'],[19,'w'],[19,'w'],[19,'w'],[19,'w'],[19,'w'],[19,'b'],[23,'g'],[19,'w'],[19,'w'],[19,'w'],[19,'b'],[22,'g'],[19,'e'],[19,'w'],[19,'w']].map(([h,c]) => `<div class="flex shrink-0 justify-end border-r border-b border-[#dadde8] ${c === 'd' ? 'bg-[#dfe3eb]' : c === 'g' ? 'bg-[#f6f6fa]' : 'bg-white'}" style="height:${h}px">${c === 'b' ? '<i class="my-[1px] flex-1 rounded-[3px] border border-[#707070] bg-linear-to-b from-[#f2f2f2] from-45% to-[#cfcfcf] to-55%"></i>' : c === 'v' ? '<i class="flex w-[18px] items-center justify-center border-t border-l border-[#555] bg-[#ddd]"><svg width="8" height="5"><path d="M0 0h8L4 5z"/></svg></i>' : c === 'e' ? '<i class="w-[17px] rounded-[3px] border border-[#707070] bg-[#e4e4e4] text-center leading-[13px] not-italic">...</i>' : ''}</div>`).join('');

// ribbon
const hex = p => '<path d="M8 3.500h12l6 10.500-6 10.500H8L2 14z" fill="url(#hx)" stroke="#000"/>' + p;
const box = (p, f) => `<rect x="2.500" y="2.500" width="23" height="23" rx="2" fill="${f || 'url(#bt)'}" stroke="#111" stroke-width="1.300"/>` + p;
const W = 'stroke="#fff" fill="none" stroke-width="2"';
const tx = t => `<text x="14" y="19.500" text-anchor="middle" font-family="Liberation Serif" font-weight="700" font-size="${t === '0.1' ? 15 : 18}" ${t === '0.1' ? 'textLength="16" lengthAdjust="spacingAndGlyphs"' : ''} fill="#fff">${t}</text>`;
const I = {
 x: hex(`<path d="M10.500 10.500l7 7M17.500 10.500l-7 7" stroke="#fff" stroke-width="3"/>`), v: hex(`<path d="M9 19l7-7" stroke="#fff" stroke-width="3"/><path d="M13 9h7v7z" fill="#fff"/>`),
 ci: hex(`<ellipse cx="14" cy="14" rx="6.500" ry="5" ${W}/>`), cv: hex(`<path d="M8 10q9-2 11 10M8 10l3-3" ${W}/>`),
 el: hex('<g transform="rotate(-40 14 14)" stroke="#eee" fill="none" stroke-width="1.300"><ellipse cx="14" cy="14" rx="9" ry="5"/><ellipse cx="14" cy="14" rx="5" ry="2"/></g>'), ln: hex(`<path d="M10 18l8-8" ${W}/><path d="M7.500 16.500h4v4h-4zM16.500 7.500h4v4h-4z" fill="#111" stroke="#fff" stroke-width="1.500"/>`),
 pl: hex('<path d="M7.500 18l3.500-7 9-3 1.500 7-6 2z" fill="#eee" stroke="#fff"/><path d="M12 12.500l5-1.500 1 3-6 2z" fill="#333"/>'), re: hex(`<path d="M14 8l6 6-6 6-6-6z" ${W}/><path d="M8 8l3 3M20 8l-3 3M8 20l3-3M20 20l-3-3" stroke="#aaa" stroke-width="1.500"/>`),
 bo: hex('<path d="M8 9l6-3 7 2v9l-6 4-7-3z" fill="#aaa" stroke="#eee"/><path d="M8 9l7 2 6-3-7-2z" fill="#fff"/><path d="M15 11v10" stroke="#eee"/>'), cl: hex('<path d="M7 15l7-7q6 0 7 6l-7 7q-6 0-7-6z" fill="#ccc" stroke="#fff"/><ellipse cx="12" cy="16" rx="3" ry="4" fill="#444" transform="rotate(-40 12 16)"/>'),
 me: hex('<path d="M14 6v16M6 14h16M8 8l12 12M20 8L8 20M9 11h10v7H9z" stroke="#ddd" fill="none"/>'), su: hex('<path d="M8 17l4-9 9-1v14q-7 1-13-4z" fill="#999" stroke="#fff"/><path d="M14 8l-1 12M10 13h11" stroke="#fff"/>'),
 bl: hex('<circle cx="14" cy="14" r="6" fill="#000" stroke="#fff" stroke-width="2"/><path d="M9 18a6 6 0 0 1 9-8z" fill="#fff" transform="rotate(180 14 14)"/>'), d7: hex(tx('7')), d01: hex(tx('0.1')), A: hex(tx('A')),
 bn: box('<path d="M14 6v9M10.500 12h7L14 17zM5 20h18M6 20v3M10 20v3M14 20v3M18 20v3M22 20v3" stroke="#111" stroke-width="1.800"/>'), pa: box('<path d="M5 22q5-7 5-4t1 3q4-10 4-8t0 7q5-12 5-10t0 7q3-5 4-4" stroke="#8a4800" stroke-width="1.900" stroke-linejoin="round" fill="none"/>','#ffc51e'),
 sw: box('<rect x="9" y="5" width="10" height="18" fill="#111"/><rect x="10.500" y="6.500" width="7" height="8" fill="url(#lg)"/>'), kn: '<circle cx="14" cy="14" r="12" fill="url(#bt)" stroke="#333"/><path d="M20 9l5 5-5 5a8 8 0 1 1 0-10z" fill="#222" stroke="#000"/>',
 nu: box('<text x="14" y="13" font-size="12" font-weight="700" fill="#777">4</text><text x="8" y="23.500" font-size="13" font-weight="700" fill="#222">5</text>'), li: box('<path d="M6 6.500h16v4H6zM6 13h16v4H6zM6 19.500h16v4H6z" fill="#ddd" stroke="#222" stroke-width="1.500"/>'),
 gm: box('<path d="M3 17h22" stroke="#111" stroke-width="1.500"/><circle cx="19" cy="17" r="2" fill="#fff" stroke="#111"/><circle cx="4" cy="17" r="2" fill="#fff" stroke="#111"/>','url(#pk)'), im: box([...Array(16)].map((_,i) => `<rect x="${3+(i%4)*5.5}" y="${3+(i>>2)*5.5}" width="5.600" height="5.600" fill="${['#78e848','#d8f8c0','#b8f090','#60d020','#18a010','#80f040','#30b018','#58c028','#0c700c','#44e020','#28a818','#0c8c0c','#054808','#0a500a','#2c9c18','#107010'][i]}"/>`).join('')),
 bs: box('<rect x="9" y="5" width="10" height="18" fill="#111"/><rect x="10.500" y="6.500" width="7" height="8" fill="url(#lg)"/>','url(#bb)'), no: '',
 ch: '<path d="M8 17Q12 10 13 5q6 5 7 14" stroke="#7a5020" fill="none" stroke-width="1.300"/><path d="M7 7q5-6 9-4-2 5-9 4z" fill="#5cb818" stroke="#256008"/><circle cx="8" cy="19" r="5" fill="url(#gr)"/><circle cx="20" cy="20.500" r="5" fill="url(#gr)"/>',
 tr: box('<path d="M12.500 25l1-9-5-3-3-1M14 16l-3-8M14 16l2-9M15 16l6-3 2-2M9 13L7 8M19 14l1-6" stroke="#111" stroke-width="1.800" fill="none"/><circle cx="8" cy="10" r="3" fill="#222" opacity=".6"/><circle cx="14" cy="8" r="3.500" fill="#222" opacity=".6"/><circle cx="20" cy="10" r="3" fill="#222" opacity=".6"/>'),
 a1: '<path d="M4 10h11V6l9 8-9 8v-4H4z" fill="#555" stroke="#222" stroke-width="1.300"/>', a2: '<path d="M4 10h11V6l9 8-9 8v-4H4z" fill="#eee" stroke="#666" stroke-width="1.300"/>',
 ca: '<ellipse cx="11" cy="12" rx="8" ry="7" fill="url(#gl)" stroke="#555" transform="rotate(-35 11 12)"/><ellipse cx="18.500" cy="17" rx="6.500" ry="7" fill="#e04890" stroke="#802050"/><circle cx="10" cy="11" r="2.500" fill="#777"/><ellipse cx="19" cy="16" rx="2.500" ry="3" fill="#fbd0e4"/>', fl: '<path d="M11.500 4h5M12.500 4v8L7 22q0 3 3 3h8q3 0 3-3l-5.500-10V4" fill="#f8e8f0" stroke="#555"/><path d="M10.500 15h7l3.500 7q0 2-3 2h-8q-3 0-3-2z" fill="#d81860"/>' };
const sp = '|';
$('ribbon').innerHTML = [['Geometry',193,46,[['x','v'],sp,['ci','cv'],['el','ln'],['pl','re'],sp,['bo','cl'],['me','su']]],['Primitive',61,38,[['bl','d7'],['d01','A']]],['Input',175,24,[['bn','pa'],sp,['sw','kn'],['nu','li'],sp,['gm','im'],sp,['bs','no']]],['Util',109,14,[['ch','tr'],sp,['a1','a2'],sp,['ca','fl']]]].map(([n,w,tw,c]) => `<div class="flex h-[74px] shrink-0 flex-col overflow-hidden rounded-[5px] border border-[#8c8c8c] bg-linear-to-b from-[#cfcfcf] to-[#ececec]" style="width:${w}px"><div class="flex h-[58px] items-start pl-[1px]">${c.map(q => q === sp ? '<i class="mx-[4.5px] mt-2 h-11 w-px shrink-0 bg-[#aaa]"></i>' : `<div class="flex flex-col">${svg(I[q[0]],28,28)}${svg(I[q[1]],28,28)}</div>`).join('')}</div><div class="flex h-[15px] items-center bg-[#1e1e1e] pb-[1px] text-[11px] text-white"><span class="flex flex-1 justify-center"><span class="whitespace-nowrap" data-w="${tw}">${n}</span></span>${svg('<path d="M4 1v6M1 4h6M2 5l2 3 2-3" stroke="#999" fill="none"/>',10,9)}</div></div>`).join('');

// canvas toolbar
const arr = '<svg class="shrink-0" width="7" height="4"><path d="M0 0h7L3.500 4z"/></svg>';
const cyl = (f,s) => `<path d="M3 14L13 3q7 0 9 8L12 22q-8-1-9-8z" fill="${f}" stroke="${s}" stroke-width="1.200"/>`;
const ring = s => `<ellipse cx="17" cy="8" rx="3" ry="5" transform="rotate(-42 17 8)" fill="none" stroke="${s}" stroke-width="1.500"/>`;
$('gtools').innerHTML = `<div class="flex items-center">
${svg('<path d="M4 2h13v10H4z" fill="#eee" stroke="#555"/><path d="M2 9h8l2-3h9v17H2z" fill="#80d458" stroke="#207008" stroke-width="1.300"/>',24,25,'ml-[5px]')}
${svg('<path d="M1.500 1.500h21v22h-19l-2-2z" fill="#2468d8" stroke="#08226c" stroke-width="1.400"/><path d="M5 2h14v10H5z" fill="#e4e8ee"/><path d="M7 5h10M7 8h10" stroke="#999"/><path d="M6 15h12v8H6z" fill="#bbc4d4" stroke="#08226c"/><path d="M8 17h4v5H8z" fill="#1848a0"/>',24,25,'ml-[6px]')}
<i class="ml-[5px] h-5 w-px bg-[#bbb]"></i>
<div class="ml-[5px] flex h-6 w-[69px] items-center border border-[#dfe3ea] bg-white pl-[3px]"><span class="text-[13px]" data-w="32">125%</span><span class="ml-auto pr-[4px]">${arr}</span></div>
${svg('<path d="M2 7V2h5M13 2h5v5M18 13v5h-5M7 18H2v-5" stroke="#111" stroke-width="3.400" fill="none"/><path d="M8 8l4 4M12 8l-4 4" stroke="#111" stroke-width="1.500"/>',20,20,'ml-[6px]')}<span class="ml-[6px]">${arr}</span>
${svg('<path d="M1 9Q11-4 23 9 11 20 1 9z" fill="#f4f8fb" stroke="#235" stroke-width="1.600"/><circle cx="12" cy="8.500" r="6" fill="#48a4e0" stroke="#123c70"/><circle cx="12" cy="8.500" r="2.500"/><circle cx="14" cy="6.500" r="1.200" fill="#fff"/>',24,18,'ml-[6px]')}<span class="ml-[5px]">${arr}</span>
${svg('<path d="M1 12q8-3 5 3-4 5-1 7 3 1 6-1" stroke="#7a1010" stroke-width="2" fill="none"/><path d="M10 12L19 2q3 0 3 4L15 19l-5 2z" fill="#f04030" stroke="#a01010"/><path d="M10 12l5 2-1 5-5 3z" fill="#f4c8a0" stroke="#822"/><path d="M13 12l6-7" stroke="#ffb0a0" stroke-width="1.500"/>',24,25,'ml-[5px]')}</div>
<div class="ml-auto mr-[3px] flex items-center">
${svg('<path d="M4 10l5-8 8 2 2 7-5 4H6z" fill="url(#lg)" stroke="#888"/><ellipse cx="12" cy="17" rx="8" ry="4.500" fill="#333" stroke="#555"/><path d="M4 19q8 7 16 0" stroke="#222" fill="none"/>',25,25,'mr-[4px]')}
${svg(cyl('#f0f0f0','#333')+ring('#444')+'<ellipse cx="8" cy="16" rx="3" ry="5" transform="rotate(-42 8 16)" fill="none" stroke="#888"/>',25,25,'mr-[2px]')}
<i class="flex h-[28px] w-[28px] items-center justify-center border border-[#3090e8] bg-white">${svg(cyl('#c01010','#600')+ring('#600')+'<path d="M6 13l8-9" stroke="#f08080" stroke-width="2"/>',25,25)}</i>
<i class="mx-[8px] h-5 w-px bg-[#bbb]"></i>
${svg(cyl('url(#lg)','#888')+'<path d="M8 8l5-5q7 0 9 8l-5 6z" fill="#50a818" stroke="#205808"/>'+ring('#1c5008')+'<path d="M3 4l17 18" stroke="#111" stroke-width="1.500"/>',25,25,'mr-[4px] ml-[1px]')}
${svg('<ellipse cx="12" cy="12" rx="10" ry="10.500" fill="url(#gl)" stroke="#666"/><path d="M12 1.500v21A10 10.500 0 0 1 12 1.500z" fill="#ec7c14" stroke="#803c00"/>',24,25)}
<i class="mx-[6px] h-5 w-px bg-[#bbb]"></i>
${svg('<path d="M10 3l7 3 3 7-4 7-7 1-6-5V8z" fill="url(#gc)" stroke="#1c3c8c" stroke-width="1.400"/>',22,25)}<span class="ml-[2px]">${arr}</span></div>`;

// node canvas
let C = ''; for (const x of [783.5,970.5,1158.5,1345.5,1533.5]) C += `<path d="M${x} 318V998" stroke="#b9b6ae"/>`;
for (let i = 0; i < 11; i++) C += `<path d="M618 ${Math.floor(368+i*62.5)+.5}H1871" stroke="#b9b6ae"/>`;
const wire = (a,b,c,d,k2) => `M${a} ${b}C${a+k2} ${b} ${c-k2} ${d} ${c} ${d}`;
C += [[665,672,713,671,20],[667,742,714,743.5,20],[807,671,841,697,20],[808,743.5,841,722,20],[928,710,1028,739,50],[1008,918.5,1028,714.5,135],[1464,771,1489,736,20]].map(w => `<path d="${wire(...w)}" stroke="#52504c" stroke-width="3.200" fill="none"/>`).join('');
const dbl = ['M1180 750C1120 752 1098 775 1098 830C1098 865 1110 910 1110 950C1110 975 1105 988 1095 1000', wire(1119,696,1180,776,44), wire(856,918.5,1028,690,140), wire(856,918.5,919,918.5,20), wire(698,912.5,763,912.5,20), wire(684,795,763,874.5,50), wire(684,795,1180,801,200), wire(681,837.5,1180,826,200), wire(1274,763,1493,482,200), wire(1274,763,1493,634,110), wire(1274,763,1489,708.5,100)];
dbl.forEach((d,i) => C += `<mask id="m${i}" maskUnits="userSpaceOnUse" x="600" y="300" width="1300" height="720"><path d="${d}" stroke="#fff" stroke-width="6.400" fill="none"/><path d="${d}" stroke="#333" stroke-width="1.800" fill="none"/></mask><g mask="url(#m${i})"><path d="${d}" stroke="#000" stroke-opacity=".62" stroke-width="7" fill="none"/></g>`);
const F = 'font-family="Open Sans, Noto Sans, sans-serif"';
const port = (x,y) => `<circle cx="${x}" cy="${y}" r="4.700" fill="#fff" stroke="#000" stroke-width="2.200"/>`;
// x1,y1,x2,y2, inner x1,x2, title, title length, inputs[[label,x,y]], outputs
const node = (x1,y1,x2,y2,a,b,t,tl2,ins,outs,f) => { const w = x2-x1, h = y2-y1, my = (y1+y2)/2, mx = t === 'Divide' ? 630.500 : (a+b)/2;
 return ins.map(p => port(x1-1,p[2])).join('') + outs.map(p => port(x2+1,p[2])).join('') +
 `<rect x="${x1}" y="${y1}" width="${w}" height="${h}" rx="3" fill="url(#${f||'nd'})" stroke="#1a1a1a" stroke-width="1.200"/><rect x="${x1+1}" y="${y1+1}" width="${w-2}" height="9" rx="2" fill="url(#gl2)"/><path d="M${x1+3} ${y2+1.5}H${x2-3}" stroke="#000" stroke-opacity=".35"/>` +
 `<rect x="${a}" y="${y1+2.5}" width="${b-a}" height="${h-5}" rx="3" fill="url(#nb)" stroke="#000" stroke-width="1.200"/><rect x="${a+1}" y="${y1+3.5}" width="${b-a-2}" height="7" rx="2" fill="#fff" fill-opacity=".35"/>` +
 `<text transform="translate(${mx+5.8} ${my}) rotate(-90)" text-anchor="middle" textLength="${tl2}" lengthAdjust="spacingAndGlyphs" ${F} font-weight="700" font-size="16" fill="#fff">${t}</text>` +
 ins.concat(outs).map(p => `<text x="${p[1]}" y="${p[2]+4.3}" text-anchor="middle" ${F} font-size="13" fill="#1a1a1a">${p[0]}</text>`).join(''); };
const panel = (x,y,t) => port(x+1,y+12.5) + `<rect x="600" y="${y}" width="${x-600}" height="25" rx="3" fill="#fffb5a" stroke="#4a4a20"/><text x="619" y="${y+15}" font-family="Liberation Mono" font-size="12.500" fill="#8c8c30">${t}</text>`;
C += panel(660,659.500,'20') + panel(662.5,729.500,'15');
const bar = (x,y,w,h,t,tx2,len) => port(x+w+1,y+h/2) + `<rect x="${x}" y="${y}" width="${w}" height="${h}" rx="3" fill="url(#nd)" stroke="#1a1a1a" stroke-width="1.200"/><rect x="${x+1}" y="${y+1}" width="${w-2}" height="8" rx="2" fill="url(#gl2)"/><text x="${tx2}" y="${y+h/2+4.2}" ${F} font-size="13" textLength="${len}" lengthAdjust="spacingAndGlyphs" fill="#222">${t}</text>`;
C += bar(600,782,78.5,25.5,'POINTS',617.5,45) + bar(600,824.500,75,25,'AL AXIS',617,44);
C += node(718,647,801.5,695.500,743,774,'Rad',30,[['D',732,671]],[['R',783,671]]);
C += node(719,719.5,802.5,768.5,744,775,'Rad',30,[['D',733,743.5]],[['R',784,743.5]]);
C += node(846,682,922.5,738.500,869,900,'Dom',38,[['A',859,697],['B',859,722]],[['I',907,710]]);
C += node(1032,674.5,1113.5,754.500,1056,1086,'ReMap',56,[['V',1045,690],['S',1046,714.5],['T',1046,739.5]],[['R',1095,696],['C',1095,733.5]]);
C += node(768.5,853.5,851,933.5,792,823,'CP',20,[['P',782,874.5],['C',782,912]],[['P',831,868],['i',829,893.5],['D',832,918]]);
C += node(590,897.5,692.5,977.5,610,646.5,'Divide',51,[],[['P',655,912],['T',655,937],['t',654,962]]);
C += '<rect x="671" y="903.500" width="16.500" height="16.500" rx="2" fill="#ddd" stroke="#444"/><path d="M679.300 906v9M674.500 911.500l4.800 5 4.800-5" stroke="#555" stroke-width="2.300" fill="none"/>';
C += '<rect x="610" y="971.500" width="15.500" height="27" fill="url(#gd)" stroke="#000"/>';
C += node(924.5,893.5,1002.5,943.5,949,980,'Bnd',31,[['N',938,918.5]],[['I',987,918.5]]);
C += node(1184.5,736,1268.5,840.500,1209.5,1240,'Rot3D',50,[['G',1198,751],['A',1198.5,776],['C',1199,801],['X',1199,826]],[['G',1249.5,763.5],['X',1249,813.5]]);
C += node(1498.5,449.500,1588.5,575.500,1531,1561,'BAKE PLATES',108,[['D1',1516,482],['D2',1516,542.5]],[['R',1570.5,512.5]],'nw');
C += node(1498.5,617.5,1585,681,1523.5,1553.5,'Wires',46,[['B',1512.5,634],['D',1512,663.5]],[['W',1565,649]]);
C += node(1493.5,692.5,1582.5,752,1521.5,1551.500,'MCol',41,[['M',1508,708.5],['C',1510,736]],[['M',1567,722.500]]);
C += bar(1350,758.500,110,24,'Swatch',1358,42) + '<rect x="1409.500" y="759.500" width="49.500" height="22" fill="#868686"/><path d="M1409.500 758.500v24" stroke="#111" stroke-width="1.300"/><path d="M1411 760.500h48v5h-48z" fill="#fff" opacity=".4"/>';
C += '<circle cx="1841.500" cy="969" r="19.500" fill="url(#cmp)" stroke="#333" stroke-width="1.300"/><circle cx="1841.500" cy="969" r="17.800" fill="none" stroke="#fff" stroke-width="2"/><radialGradient id="cmp"><stop offset="0" stop-color="#f0f0f0"/><stop offset="1" stop-color="#aaa"/></radialGradient><path d="M1845 951l7 3-4 4zM1824 965l0-7 5 6zM1860 974l-7 2 5 4zM1832 986l4-5 3 6z" fill="#fff"/><path d="M1820.500 974Q1820 954 1837 949" stroke="#000" stroke-width="3.500" fill="none"/><path d="M1812 957l6-1 4 4-5 4z"/>';
$('canvas').innerHTML = C;

// Condense or widen each label to the width its slot allows, whenever its natural width changes.
const fit = t => { if (t.offsetWidth) t.style.transform = `scaleX(${(t.parentElement.dataset.w / t.offsetWidth).toFixed(4)})`; };
const watch = new ResizeObserver(list => list.forEach(r => fit(r.target)));
document.querySelectorAll('[data-w]').forEach(e => {
  const t = document.createElement('span');
  t.className = 'inline-block origin-left whitespace-nowrap';
  t.textContent = e.textContent;
  e.textContent = '';
  e.append(t);
  e.style.width = e.dataset.w + 'px';
  e.style.flexShrink = 0;
  watch.observe(t);
});
addEventListener('load', () => document.querySelectorAll('[data-w] > span').forEach(fit));
</script>
</body>
</html>
